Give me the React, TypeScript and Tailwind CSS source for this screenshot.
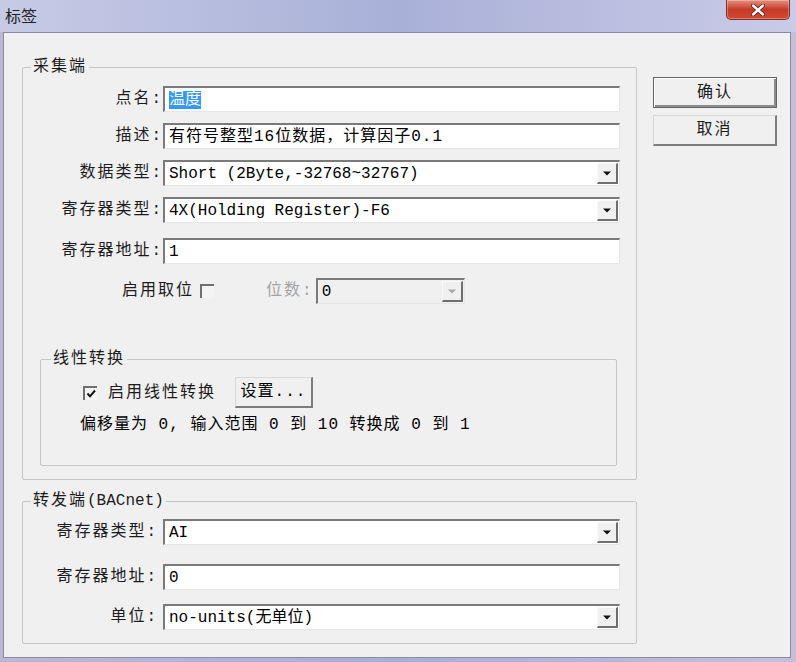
import type { ReactNode } from "react";

const FONT = "font-['Liberation_Mono','Noto_Sans_CJK_SC',monospace]";
const LABEL = `${FONT} text-[16px] leading-[20px] tracking-[2px] text-[#1c1c1c] whitespace-nowrap`;
const VALUE = `${FONT} text-[16px] leading-[20px] text-black whitespace-nowrap`;

const SUNKEN =
  "border-t-2 border-l-2 border-r border-b border-t-[#7a7a7a] border-l-[#7a7a7a] border-r-[#e6e6e6] border-b-[#e6e6e6]";
const RAISED =
  "border-t border-l border-r-2 border-b-2 border-t-[#d8d8d8] border-l-[#d8d8d8] border-r-[#7c7c7c] border-b-[#7c7c7c] bg-[#f0f0f0]";

const Arrow = ({ color = "#111" }: { color?: string }) => (
  <svg width="8" height="5" viewBox="0 0 8 5">
    <path d="M0 0.5h8L4 4.5z" fill={color} />
  </svg>
);

const TextBox = ({
  children,
  combo,
  disabled,
  className = "",
}: {
  children?: ReactNode;
  combo?: boolean;
  disabled?: boolean;
  className?: string;
}) => (
  <div
    className={`flex h-[26px] items-center pl-[4px] ${SUNKEN} ${
      disabled ? "bg-[#f0f0f0] text-[#9a9a9a]" : "bg-white"
    } ${className}`}
  >
    <div className={`${VALUE} ${disabled ? "text-[#9a9a9a]" : ""} flex-1 overflow-hidden`}>{children}</div>
    {combo && (
      <div
        className={`mr-[1px] flex h-[21px] w-[21px] items-center justify-center border-t border-l border-r-2 border-b-2 border-t-[#fafafa] border-l-[#fafafa] border-r-[#6e6e6e] border-b-[#6e6e6e] bg-[#f0f0f0]`}
      >
        <Arrow color={disabled ? "#a8a8a8" : "#111"} />
      </div>
    )}
  </div>
);

const Row = ({
  label,
  labelClass = "w-[140px]",
  children,
  className = "",
}: {
  label: string;
  labelClass?: string;
  children: ReactNode;
  className?: string;
}) => (
  <div className={`flex items-center ${className}`}>
    <div className={`${LABEL} shrink-0 text-right ${labelClass}`}>{label}</div>
    {children}
  </div>
);

const CheckBox = ({ checked }: { checked?: boolean }) => (
  <div className="flex h-[14px] w-[14px] items-center justify-center border-t-2 border-l-2 border-t-[#6f6f6f] border-l-[#6f6f6f] bg-[#f4f4f4]">
    {checked && (
      <svg width="10" height="10" viewBox="0 0 10 10">
        <path d="M1.5 4.5l2.5 2.8L9 1.5" stroke="#111" strokeWidth="2" fill="none" />
      </svg>
    )}
  </div>
);

const Group = ({
  title,
  className = "",
  titleClass = "left-[8px]",
  children,
}: {
  title: ReactNode;
  className?: string;
  titleClass?: string;
  children: ReactNode;
}) => (
  <div className={`relative flex flex-col rounded-[2px] border border-[#c6c6c6] ${className}`}>
    <div className={`absolute top-[-11px] bg-[#f0f0f0] px-[2px] ${LABEL} ${titleClass}`}>{title}</div>
    {children}
  </div>
);

export default function App() {
  return (
    <div className="flex h-[662px] w-[796px] flex-col bg-linear-to-r from-[#bdb7d6] via-[#aaaed6] to-[#c6bfdb]">
      {/* title bar */}
      <div className="flex h-[32px] shrink-0 items-start justify-between bg-linear-to-r from-[#c6cbe5] via-[#a9b0d8] to-[#c9cbe7] pr-[6px]">
        <div className="ml-[5px] mt-[5px] font-['Noto_Sans_CJK_SC',sans-serif] text-[16px] leading-[20px] text-[#222]">
          标签
        </div>
        <div className="flex h-[20px] w-[64px] items-center justify-center rounded-b-[5px] border border-t-0 border-[#7e3026] bg-linear-to-b from-[#e58e7e] via-[#c63a26] to-[#d24a32] shadow-[inset_0_0_0_1px_rgba(255,255,255,0.3)]">
          <svg width="14" height="12" viewBox="0 0 14 12">
            <path d="M2 1.5l10 9M12 1.5l-10 9" stroke="#5a1a12" strokeWidth="4" strokeLinecap="round" />
            <path d="M2 1.5l10 9M12 1.5l-10 9" stroke="#fff" strokeWidth="2.4" strokeLinecap="round" />
          </svg>
        </div>
      </div>

      {/* client area */}
      <div className="mb-[4px] ml-[3px] mr-[5px] flex flex-1 items-start border border-[#8a8aa0] bg-[#f0f0f0]">
        <div className="ml-[18px] mt-[34px] flex flex-col">
          <Group title="采集端" className="h-[413px] w-[615px]">
            <Row label="点名:" className="mt-[18px]">
              <TextBox className="w-[457px]">
                <span className="bg-[#3399ff] text-white">温度</span>
              </TextBox>
            </Row>
            <Row label="描述:" className="mt-[11px]">
              <TextBox className="w-[457px]">
                <span className="tracking-[1px]">有符号整型16位数据，计算因子0.1</span>
              </TextBox>
            </Row>
            <Row label="数据类型:" className="mt-[11px]">
              <TextBox combo className="w-[457px]">
                Short (2Byte,-32768~32767)
              </TextBox>
            </Row>
            <Row label="寄存器类型:" className="mt-[11px]">
              <TextBox combo className="w-[457px]">
                4X(Holding Register)-F6
              </TextBox>
            </Row>
            <Row label="寄存器地址:" className="mt-[15px]">
              <TextBox className="w-[457px]">1</TextBox>
            </Row>
            <div className="mt-[14px] flex items-center pl-[99px]">
              <div className={LABEL}>启用取位</div>
              <div className="ml-[6px]">
                <CheckBox />
              </div>
              <div className={`${LABEL} ml-[52px] text-[#a4a4a4]`}>位数:</div>
              <TextBox combo disabled className="ml-[2px] w-[149px]">
                0
              </TextBox>
            </div>

            <Group
              title="线性转换"
              titleClass="left-[10px]"
              className="ml-[17px] mt-[55px] h-[107px] w-[577px]"
            >
              <div className="mt-[17px] flex items-center">
                <div className="ml-[42px]">
                  <CheckBox checked />
                </div>
                <div className={`${LABEL} ml-[11px]`}>启用线性转换</div>
                <div
                  className={`ml-[19px] flex h-[31px] w-[78px] items-center justify-center ${RAISED} ${VALUE} tracking-[1px]`}
                >
                  设置...
                </div>
              </div>
              <div className={`${VALUE} ml-[39px] mt-[7px] tracking-[1px] text-[#1c1c1c]`}>
                偏移量为 0, 输入范围 0 到 10 转换成 0 到 1
              </div>
            </Group>
          </Group>

          <Group
            title={
              <>
                <span>转发端</span>
                <span className="tracking-normal">(BACnet)</span>
              </>
            }
            className="mt-[21px] h-[143px] w-[615px]"
          >
            <Row label="寄存器类型:" labelClass="w-[135px] mr-[5px]" className="mt-[17px]">
              <TextBox combo className="w-[457px]">
                AI
              </TextBox>
            </Row>
            <Row label="寄存器地址:" labelClass="w-[135px] mr-[5px]" className="mt-[19px]">
              <TextBox className="w-[457px]">0</TextBox>
            </Row>
            <Row label="单位:" labelClass="w-[135px] mr-[5px]" className="mt-[14px]">
              <TextBox combo className="w-[457px]">
                no-units(无单位)
              </TextBox>
            </Row>
          </Group>
        </div>

        <div className="ml-[16px] mt-[44px] flex flex-col">
          <div
            className={`flex h-[31px] w-[124px] items-center justify-center border border-[#656565] bg-[#f0f0f0] shadow-[inset_1px_1px_0_#fdfdfd,inset_-2px_-2px_0_#8c8c8c] ${LABEL} tracking-[1px]`}
          >
            确认
          </div>
          <div
            className={`mt-[7px] flex h-[31px] w-[124px] items-center justify-center ${RAISED} ${LABEL} tracking-[1px]`}
          >
            取消
          </div>
        </div>
      </div>
    </div>
  );
}
